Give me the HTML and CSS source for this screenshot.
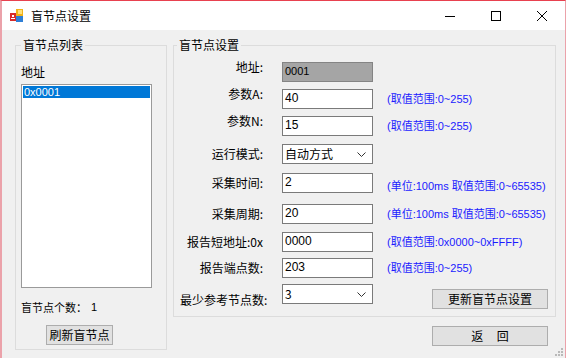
FILE: index.html
```html
<!DOCTYPE html>
<html>

<head>
  <title>盲节点设置</title>
  <link rel="stylesheet" href="styles.css">
</head>

<body>
  <div class="window">
    <div class="titlebar">
      <svg class="app-icon" width="14" height="14" viewBox="0 0 14 14">
        <rect x="6" y="0" width="7" height="7" fill="#f2b318"/>
        <rect x="8" y="1" width="4" height="4" fill="#ffe07a"/>
        <rect x="6" y="7" width="7" height="6" fill="#2f7fd6"/>
        <rect x="0" y="4" width="6" height="8" fill="#d92b2b"/>
        <rect x="2" y="6" width="2" height="2" fill="#ffffff"/>
        <rect x="1" y="9" width="4" height="1" fill="#ffffff"/>
      </svg>
      <span class="title">盲节点设置</span>
      <div class="win-buttons">
        <svg width="46" height="29" viewBox="0 0 46 29"><line x1="18" y1="15.5" x2="28" y2="15.5" stroke="#000" stroke-width="1"/></svg>
        <svg width="46" height="29" viewBox="0 0 46 29"><rect x="18.5" y="10.5" width="9" height="9" fill="none" stroke="#000" stroke-width="1"/></svg>
        <svg width="46" height="29" viewBox="0 0 46 29"><path d="M18 10 L28 20 M28 10 L18 20" stroke="#000" stroke-width="1"/></svg>
      </div>
    </div>

    <div class="content">
      <fieldset class="group group-list">
        <legend>盲节点列表</legend>
        <div class="list-label">地址</div>
        <div class="listbox">
          <div class="list-item selected">0x0001</div>
        </div>
        <div class="count-row">
          <span>盲节点个数：</span>
          <span class="count">1</span>
        </div>
        <button class="btn btn-refresh">刷新盲节点</button>
      </fieldset>

      <div class="right-col">
        <fieldset class="group group-settings">
          <legend>盲节点设置</legend>
          <div class="form-grid">
            <label class="lbl lbl-high">地址:</label>
            <div class="field disabled">0001</div>
            <span></span>

            <label class="lbl lbl-high">参数A:</label>
            <div class="field">40</div>
            <span class="hint">(取值范围:0~255)</span>

            <label class="lbl lbl-high">参数N:</label>
            <div class="field">15</div>
            <span class="hint">(取值范围:0~255)</span>

            <label class="lbl">运行模式:</label>
            <div class="field combo">自动方式
              <svg class="chev" width="9" height="5" viewBox="0 0 9 5"><path d="M0.5 0.5 L4.5 4.5 L8.5 0.5" fill="none" stroke="#333" stroke-width="1"/></svg>
            </div>
            <span></span>

            <label class="lbl">采集时间:</label>
            <div class="field">2</div>
            <span class="hint hint-low">(单位:100ms 取值范围:0~65535)</span>

            <label class="lbl">采集周期:</label>
            <div class="field">20</div>
            <span class="hint">(单位:100ms 取值范围:0~65535)</span>

            <label class="lbl">报告短地址:0x</label>
            <div class="field">0000</div>
            <span class="hint">(取值范围:0x0000~0xFFFF)</span>

            <label class="lbl">报告端点数:</label>
            <div class="field">203</div>
            <span class="hint">(取值范围:0~255)</span>

            <label class="lbl lbl-low">最少参考节点数:</label>
            <div class="field combo">3
              <svg class="chev" width="9" height="5" viewBox="0 0 9 5"><path d="M0.5 0.5 L4.5 4.5 L8.5 0.5" fill="none" stroke="#333" stroke-width="1"/></svg>
            </div>
            <div class="action-cell">
              <button class="btn btn-wide">更新盲节点设置</button>
            </div>
          </div>
        </fieldset>
        <button class="btn btn-wide btn-back">返&nbsp;&nbsp;&nbsp;&nbsp;&nbsp;回</button>
      </div>
    </div>

    <svg class="grip" width="8" height="8" viewBox="0 0 8 8">
      <rect x="6" y="0" width="2" height="2" fill="#b9b9b9"/>
      <rect x="3" y="3" width="2" height="2" fill="#b9b9b9"/>
      <rect x="6" y="3" width="2" height="2" fill="#b9b9b9"/>
      <rect x="0" y="6" width="2" height="2" fill="#b9b9b9"/>
      <rect x="3" y="6" width="2" height="2" fill="#b9b9b9"/>
      <rect x="6" y="6" width="2" height="2" fill="#b9b9b9"/>
    </svg>
  </div>
</body>

</html>
```

FILE: styles.css
```css
body {
  margin: 0;
  background-color: #ffffff;
  font-family: "Noto Sans CJK SC", "Liberation Sans", sans-serif;
  font-size: 12px;
  color: #000000;
}

.window {
  position: relative;
  width: 566px;
  height: 358px;
  box-sizing: border-box;
  border-left: 2px solid #eba2aa;
  border-top: 1px solid #e8414f;
  border-right: 1px solid #eba2aa;
  background-color: #f0f0f0;
  display: flex;
  flex-direction: column;
  overflow: hidden;
}

.titlebar {
  height: 29px;
  background-color: #ffffff;
  display: flex;
  align-items: center;
}

.app-icon {
  margin-left: 8px;
  margin-top: 1px;
}

.title {
  margin-left: 7px;
  font-size: 12px;
  line-height: 16px;
}

.win-buttons {
  margin-left: auto;
  display: flex;
}

.content {
  flex: 1;
  display: flex;
  padding: 7px 0 0 13px;
  gap: 6px;
}

.group {
  margin: 0;
  padding: 0;
  min-inline-size: 0;
  border: 1px solid #dcdcdc;
  box-sizing: border-box;
}

.group legend {
  padding: 0 2px;
  font-size: 12px;
  line-height: 16px;
}

.group-list {
  width: 152px;
  height: 313px;
  padding: 0 14px 0 5px;
}

.group-list legend {
  margin-left: 0;
}

.list-label {
  margin-top: 11px;
  line-height: 16px;
}

.listbox {
  margin-top: 4px;
  width: 131px;
  height: 204px;
  box-sizing: border-box;
  background-color: #ffffff;
  border: 1px solid #9a9a9a;
  padding: 1px;
}

.list-item {
  height: 12px;
  line-height: 12px;
  padding-left: 1px;
  font-family: "Liberation Sans", sans-serif;
  font-size: 11px;
}

.list-item.selected {
  background-color: #0078d7;
  color: #ffffff;
}

.count-row {
  margin-top: 11px;
  line-height: 16px;
  font-size: 11px;
  display: flex;
}

.count {
  margin-left: 4px;
  font-family: "Liberation Sans", sans-serif;
}

.btn {
  height: 20px;
  box-sizing: border-box;
  background-color: #e1e1e1;
  border: 1px solid #adadad;
  font-family: "Noto Sans CJK SC", sans-serif;
  font-size: 12px;
  line-height: 16px;
  padding: 0;
  color: #000000;
}

.btn-refresh {
  display: block;
  margin-top: 10px;
  margin-left: 25px;
  width: 67px;
}

.right-col {
  display: flex;
  flex-direction: column;
}

.group-settings {
  width: 383px;
  height: 280px;
  padding: 0 0 0 6px;
}

.group-settings legend {
  margin-left: -3px;
}

.form-grid {
  margin-top: 9px;
  display: grid;
  grid-template-columns: 83px 105px 1fr;
  grid-template-rows: 27px 27px 28px 29px 31px 28px 26px 26px 25px;
  column-gap: 19px;
}

.form-grid > * {
  align-self: start;
}

.lbl {
  text-align: right;
  line-height: 20px;
  white-space: nowrap;
}

.lbl-high {
  line-height: 10px;
}

.lbl-low {
  margin-top: 6px;
}

.field {
  width: 91px;
  height: 20px;
  box-sizing: border-box;
  background-color: #ffffff;
  border: 1px solid #7a7a7a;
  padding-left: 2px;
  line-height: 17px;
  font-family: "Liberation Sans", sans-serif;
  font-size: 12px;
}

.field.disabled {
  background-color: #a5a5a5;
  border-color: #848484;
  font-size: 11px;
}

.field.combo {
  display: flex;
  align-items: center;
  justify-content: space-between;
  padding-right: 6px;
  font-family: "Noto Sans CJK SC", sans-serif;
  line-height: 16px;
}

.hint {
  margin-left: -19px;
  line-height: 20px;
  font-family: "Liberation Sans", "Noto Sans CJK SC", sans-serif;
  font-size: 11px;
  color: #1a1aff;
  white-space: nowrap;
}

.hint-low {
  margin-top: 3px;
}

.action-cell {
  padding-top: 5px;
}

.btn-wide {
  width: 116px;
  margin-left: 26px;
}

.btn-back {
  margin-top: 9px;
  margin-left: 259px;
}

.grip {
  position: absolute;
  right: 2px;
  bottom: 2px;
}
```
